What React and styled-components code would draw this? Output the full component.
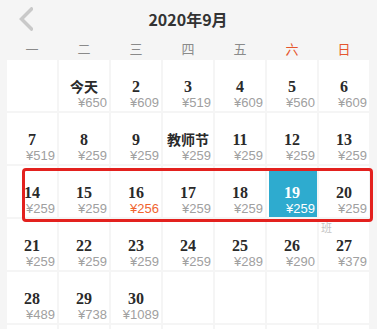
import React from "react";
import styled, { createGlobalStyle } from "styled-components";

const Global = createGlobalStyle`
  html, body { margin: 0; padding: 0; overflow: hidden; background: #f5f5f5; }
  body { font-family: "Liberation Sans", "Noto Sans CJK SC", sans-serif; }
`;

const Page = styled.div`
  width: 377px;
  height: 329px;
  padding: 0 8px 0 7px;
  box-sizing: border-box;
  background: #f5f5f5;
`;

const Header = styled.div`
  display: grid;
  grid-template-columns: 1fr auto 1fr;
  align-items: center;
  height: 38px;
`;

const Back = styled.svg`
  justify-self: start;
  margin-left: 12px;
  display: block;
`;

const Title = styled.div`
  font-family: "Noto Sans CJK SC", sans-serif;
  font-weight: 700;
  font-size: 16px;
  color: #333;
  line-height: 38px;
`;

const Weekdays = styled.div`
  display: grid;
  grid-template-columns: repeat(7, 50px);
  column-gap: 2px;
  height: 22px;
  align-items: center;
`;

const Weekday = styled.div`
  text-align: center;
  font-family: "Noto Sans CJK SC", sans-serif;
  font-size: 13px;
  line-height: 22px;
  color: ${(p) => (p.$weekend ? "#e5552d" : "#8a8a8a")};
`;

const GridWrap = styled.div`
  position: relative;
`;

const Grid = styled.div`
  display: grid;
  grid-template-columns: repeat(7, 50px);
  grid-auto-rows: 51px;
  gap: 2px;
`;

const Cell = styled.div`
  position: relative;
  background: ${(p) => (p.$selected ? "#2eabcf" : "#fff")};
  box-shadow: ${(p) => (p.$selected ? "inset 2px 4px 0 #fff" : "none")};
  padding-top: 18px;
  box-sizing: border-box;
`;

const Day = styled.div`
  text-align: center;
  font-family: ${(p) =>
    p.$label ? `"Noto Sans CJK SC", sans-serif` : `"Liberation Serif", serif`};
  font-weight: 700;
  font-size: ${(p) => (p.$label ? "14px" : "16px")};
  line-height: ${(p) => (p.$label ? "20px" : "18px")};
  height: ${(p) => (p.$label ? "20px" : "18px")};
  margin-top: ${(p) => (p.$label ? "-2px" : "0")};
  color: ${(p) => (p.$selected ? "#fff" : "#2a2a2a")};
  position: relative;
  z-index: 2;
`;

const Price = styled.div`
  text-align: right;
  padding-right: 2px;
  font-family: "Liberation Sans", sans-serif;
  font-size: 13px;
  line-height: 14px;
  color: ${(p) => (p.$selected ? "#fff" : p.$low ? "#f0642f" : "#a0a0a0")};
`;

const Badge = styled.span`
  position: absolute;
  top: 3px;
  left: 2px;
  font-family: "Noto Sans CJK SC", sans-serif;
  font-size: 11px;
  line-height: 11px;
  color: #c4c4c4;
`;

const Highlight = styled.div`
  position: absolute;
  left: 15px;
  top: 108px;
  width: 351px;
  height: 54px;
  border: 3px solid #e3211e;
  border-radius: 4px;
  box-sizing: border-box;
  z-index: 1;
  pointer-events: none;
`;

const weekdays = ["一", "二", "三", "四", "五", "六", "日"];

const cells = [
  null,
  { d: "今天", p: "650" },
  { d: "2", p: "609" },
  { d: "3", p: "519" },
  { d: "4", p: "609" },
  { d: "5", p: "560" },
  { d: "6", p: "609" },
  { d: "7", p: "519" },
  { d: "8", p: "259" },
  { d: "9", p: "259" },
  { d: "教师节", p: "259" },
  { d: "11", p: "259" },
  { d: "12", p: "259" },
  { d: "13", p: "259" },
  { d: "14", p: "259" },
  { d: "15", p: "259" },
  { d: "16", p: "256", low: true },
  { d: "17", p: "259" },
  { d: "18", p: "259" },
  { d: "19", p: "259", selected: true },
  { d: "20", p: "259" },
  { d: "21", p: "259" },
  { d: "22", p: "259" },
  { d: "23", p: "259" },
  { d: "24", p: "259" },
  { d: "25", p: "289" },
  { d: "26", p: "290" },
  { d: "27", p: "379", badge: "班" },
  { d: "28", p: "489" },
  { d: "29", p: "738" },
  { d: "30", p: "1089" },
  null, null, null, null,
  null, null, null, null, null, null, null,
];

export default function App() {
  return (
    <>
      <Global />
      <Page>
        <Header>
          <Back width="14" height="24" viewBox="0 0 14 24">
            <polyline
              points="12.5,2 2.5,12 12.5,22"
              fill="none"
              stroke="#c9c9c9"
              strokeWidth="3.5"
              strokeLinecap="square"
            />
          </Back>
          <Title>2020年9月</Title>
          <span />
        </Header>
        <Weekdays>
          {weekdays.map((w, i) => (
            <Weekday key={w} $weekend={i >= 5}>
              {w}
            </Weekday>
          ))}
        </Weekdays>
        <GridWrap>
          <Grid>
            {cells.map((c, i) =>
              c ? (
                <Cell key={i} $selected={c.selected}>
                  {c.badge && <Badge>{c.badge}</Badge>}
                  <Day $selected={c.selected} $label={!/^\d+$/.test(c.d)}>
                    {c.d}
                  </Day>
                  <Price $selected={c.selected} $low={c.low}>
                    ¥{c.p}
                  </Price>
                </Cell>
              ) : (
                <Cell key={i} />
              )
            )}
          </Grid>
          <Highlight />
        </GridWrap>
      </Page>
    </>
  );
}
